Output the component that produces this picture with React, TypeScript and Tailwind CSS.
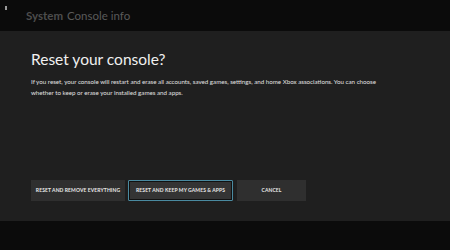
export default function App() {
  return (
    <div
      className="w-[450px] h-[250px] flex flex-col bg-[#0b0b0b] overflow-hidden"
      style={{ fontFamily: "Lato, 'Noto Sans', sans-serif" }}
    >
      {/* header */}
      <div className="h-[31px] shrink-0 relative flex items-center pl-[26px]">
        <div className="absolute left-[5px] top-[6px] w-[2px] h-[4px] bg-[#9a9a9a]" />
        <span className="text-[11.5px] font-bold text-[#4d4d4d] leading-none">System</span>
        <span className="text-[11.5px] text-[#5a5a5a] leading-none ml-[4px]">Console info</span>
      </div>

      {/* dialog */}
      <div className="h-[190px] shrink-0 bg-[#1f1f1f] flex flex-col pl-[31px] pr-[60px]">
        <h1 className="mt-[21px] text-[15.5px] leading-none text-[#f0f0f0]">
          Reset your console?
        </h1>
        <p className="mt-[8px] text-[6.2px] leading-[11px] text-[#e0e0e0] w-[352px]">
          If you reset, your console will restart and erase all accounts, saved games, settings, and home Xbox associations. You can choose whether to keep or erase your installed games and apps.
        </p>
        <div className="mt-auto mb-[20px] flex gap-[3px]">
          <button className="w-[94px] h-[21px] bg-[#2f2f2f] text-[5px] font-bold text-[#e8e8e8] tracking-[0.1px]">
            RESET AND REMOVE EVERYTHING
          </button>
          <button className="w-[105px] h-[21px] bg-[#343434] text-[5px] font-bold text-[#e8e8e8] border border-[#4a8aa0] rounded-[1px] shadow-[inset_0_0_0_1px_#111] tracking-[0.1px]">
            RESET AND KEEP MY GAMES &amp; APPS
          </button>
          <button className="w-[69px] h-[21px] bg-[#2f2f2f] text-[5px] font-bold text-[#e8e8e8] tracking-[0.1px] ml-[1px]">
            CANCEL
          </button>
        </div>
      </div>
    </div>
  );
}
